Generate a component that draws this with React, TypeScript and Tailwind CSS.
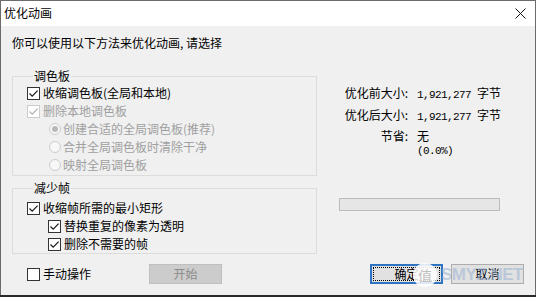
import clsx from "clsx";

const GREY = "text-[#a0a0a0]";

function Check({ checked, disabled }: { checked?: boolean; disabled?: boolean }) {
  return (
    <span
      className={clsx(
        "flex h-[13px] w-[13px] shrink-0 items-center justify-center border bg-white",
        disabled ? "border-[#cccccc]" : "border-[#333333]"
      )}
    >
      {checked && (
        <svg width="11" height="11" viewBox="0 0 11 11">
          <path
            d="M1.5 5.5 L4.2 8.2 L9.6 2.6"
            fill="none"
            stroke={disabled ? "#b0b0b0" : "#1a1a1a"}
            strokeWidth="1.2"
          />
        </svg>
      )}
    </span>
  );
}

function Radio({ on }: { on?: boolean }) {
  return (
    <span className="flex h-[12px] w-[12px] shrink-0 items-center justify-center rounded-full border border-[#cccccc] bg-[#f7f7f7]">
      {on && <span className="h-[6px] w-[6px] rounded-full bg-[#b8b8b8]" />}
    </span>
  );
}

function Row({ children, className }: { children: React.ReactNode; className?: string }) {
  return <div className={clsx("flex h-[18px] items-center", className)}>{children}</div>;
}

export default function App() {
  return (
    <div className="relative h-[297px] w-[536px] overflow-hidden bg-[#2b2b2b] font-['Noto_Sans_CJK_SC',sans-serif] text-[12px] text-black">
      <div className="flex h-[295px] flex-col border border-b-0 border-[#6b6b6b] bg-[#f0f0f0]">
        {/* title bar */}
        <div className="flex h-[25px] items-center justify-between bg-white pb-[1px] pl-[3px] pr-[9px]">
          <span className="leading-[16px]">优化动画</span>
          <svg width="11" height="11" viewBox="0 0 11 11">
            <path d="M0.5 0.5 L10.5 10.5 M10.5 0.5 L0.5 10.5" stroke="#111" strokeWidth="1" />
          </svg>
        </div>

        <div className="flex flex-col pl-[11px]">
          <p className="mt-[9px] leading-[16px]">你可以使用以下方法来优化动画, 请选择</p>

          <div className="mt-[17px] flex">
            <div className="w-[305px]">
              <fieldset className="border border-[#dcdcdc] pb-[1px] pl-[14px]">
                <legend className="ml-[6px] px-[1px] leading-[16px]">调色板</legend>
                <Row className="gap-[3px]">
                  <Check checked />
                  <span>收缩调色板(全局和本地)</span>
                </Row>
                <Row className="gap-[3px]">
                  <Check checked disabled />
                  <span className={GREY}>删除本地调色板</span>
                </Row>
                <div className="pl-[22px]">
                  <Row className="gap-[2px]">
                    <Radio on />
                    <span className={GREY}>创建合适的全局调色板(推荐)</span>
                  </Row>
                  <Row className="gap-[2px]">
                    <Radio />
                    <span className={GREY}>合并全局调色板时清除干净</span>
                  </Row>
                  <Row className="gap-[2px]">
                    <Radio />
                    <span className={GREY}>映射全局调色板</span>
                  </Row>
                </div>
              </fieldset>

              <fieldset className="mt-[4px] border border-[#dcdcdc] pl-[14px]">
                <legend className="ml-[6px] px-[1px] leading-[16px]">减少帧</legend>
                <div className="mt-[3px]">
                  <Row className="gap-[3px]">
                    <Check checked />
                    <span>收缩帧所需的最小矩形</span>
                  </Row>
                  <div className="pl-[21px]">
                    <Row className="gap-[3px]">
                      <Check checked />
                      <span>替换重复的像素为透明</span>
                    </Row>
                    <Row className="gap-[3px]">
                      <Check checked />
                      <span>删除不需要的帧</span>
                    </Row>
                  </div>
                </div>
              </fieldset>
            </div>

            <div className="flex flex-1 flex-col">
              <div className="mt-[15px] grid grid-cols-[91px_auto] gap-x-[9px]">
                <span className="text-right leading-[20px]">优化前大小:</span>
                <span className="leading-[20px]">
                  <span className="font-['Liberation_Mono',monospace] text-[11px] tracking-[-0.6px]">1,921,277 </span>字节
                </span>
                <span className="text-right leading-[20px]">优化后大小:</span>
                <span className="leading-[20px]">
                  <span className="font-['Liberation_Mono',monospace] text-[11px] tracking-[-0.6px]">1,921,277 </span>字节
                </span>
                <span className="text-right leading-[18px]">节省:</span>
                <span className="leading-[18px]">无</span>
                <span />
                <span className="font-['Liberation_Mono',monospace] text-[11px] leading-[12px] tracking-[-0.6px]">(0.0%)</span>
              </div>
              <div className="ml-[22px] mt-[41px] h-[13px] w-[161px] border border-[#bcbcbc] bg-[#e6e6e6]" />
            </div>
          </div>

          <div className="mt-[10px] flex h-[20px] items-center">
            <div className="ml-[15px] flex w-[122px] items-center gap-[3px]">
              <Check />
              <span>手动操作</span>
            </div>
            <button className="flex h-[20px] w-[73px] items-center justify-center border border-[#bfbfbf] bg-[#cccccc] text-[#8a8a8a]">
              开始
            </button>
            <button className="relative ml-[148px] flex h-[20px] w-[73px] items-center justify-center border-2 border-[#2f74c0] bg-[#e1e1e1]">
              <span className="absolute inset-[1px] border border-dotted border-black" />
              确定
            </button>
            <button className="ml-[8px] flex h-[20px] w-[73px] items-center justify-center border border-[#adadad] bg-[#e1e1e1]">
              取消
            </button>
          </div>
        </div>
      </div>

      {/* watermark */}
      <div className="absolute left-[413px] top-[263px] flex h-[24px] w-[24px] items-center justify-center rounded-full bg-white/85 text-[14px] text-[#c0c0c0]">
        值
      </div>
      <div className="absolute left-[441px] top-[262px] font-['Liberation_Sans',sans-serif] text-[17px] font-bold tracking-[-0.5px] text-[#9fb6d4]/60">
        SMYZ.NET
      </div>
    </div>
  );
}
